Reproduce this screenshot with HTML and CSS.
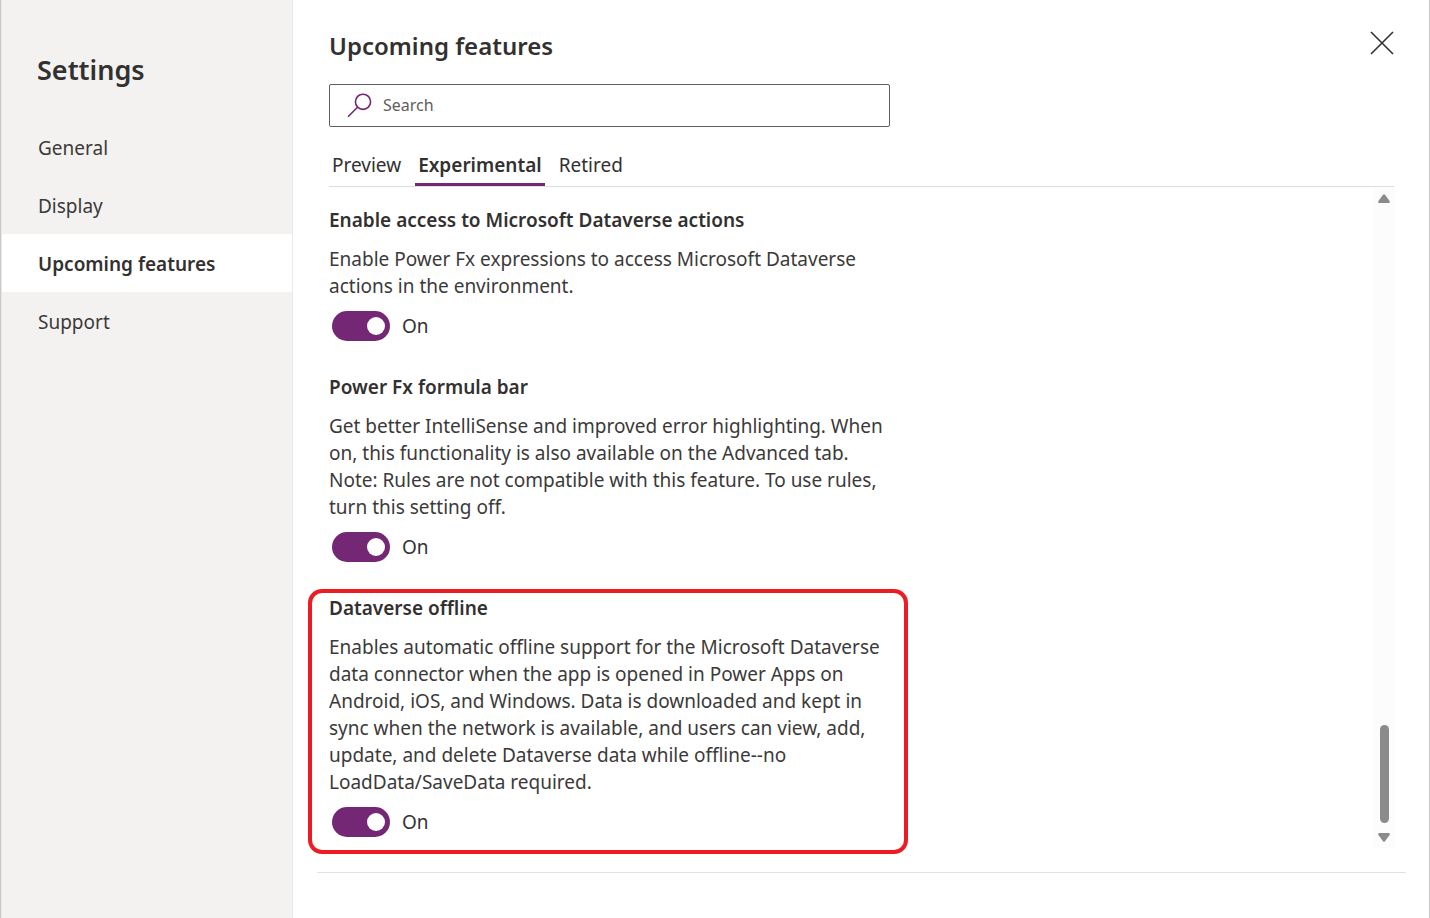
FILE: index.html
```html
<!DOCTYPE html>
<html lang="en">
<head>
<meta charset="utf-8">
<title>Settings</title>
<link rel="stylesheet" href="styles.css">
</head>
<body>
<div class="dialog">
  <aside class="sidebar">
    <h1 class="sidebar-title">Settings</h1>
    <nav class="nav" aria-label="Settings">
      <a class="nav-link" href="#general">General</a>
      <a class="nav-link" href="#display">Display</a>
      <a class="nav-link nav-link-active" href="#upcoming" aria-current="page">Upcoming features</a>
      <a class="nav-link" href="#support">Support</a>
    </nav>
  </aside>
  <main class="main">
    <header class="header">
      <h2 class="page-title">Upcoming features</h2>
      <button class="close" type="button" aria-label="Close">
        <svg width="24" height="24" viewBox="0 0 24 24" fill="none" stroke="#323130" stroke-width="1.6"><path d="M1 1 23 23M23 1 1 23"/></svg>
      </button>
    </header>
    <label class="search">
      <svg width="26" height="26" viewBox="0 0 26 26" fill="none" stroke="#742774" stroke-width="1.6"><circle cx="16" cy="8.8" r="7.6"/><path d="M10.5 14.3 1 23.8"/></svg>
      <input class="search-input" type="search" placeholder="Search" aria-label="Search">
    </label>
    <div class="tabs" role="tablist">
      <button class="tab" type="button" role="tab" aria-selected="false">Preview</button>
      <button class="tab tab-active" type="button" role="tab" aria-selected="true">Experimental</button>
      <button class="tab" type="button" role="tab" aria-selected="false">Retired</button>
    </div>
    <div class="panel">
      <div class="features">
        <section class="feature">
          <h3 class="feature-title" id="actions">Enable access to Microsoft Dataverse actions</h3>
          <p class="feature-text">Enable Power Fx expressions to access Microsoft Dataverse actions in the environment.</p>
          <label class="toggle"><input class="switch" type="checkbox" role="switch" aria-describedby="actions" checked>On</label>
        </section>
        <section class="feature">
          <h3 class="feature-title" id="formula">Power Fx formula bar</h3>
          <p class="feature-text">Get better IntelliSense and improved error highlighting. When on, this functionality is also available on the Advanced tab. Note: Rules are not compatible with this feature. To use rules, turn this setting off.</p>
          <label class="toggle"><input class="switch" type="checkbox" role="switch" aria-describedby="formula" checked>On</label>
        </section>
        <section class="feature feature-marked">
          <h3 class="feature-title" id="offline">Dataverse offline</h3>
          <p class="feature-text">Enables automatic offline support for the Microsoft Dataverse data connector when the app is opened in Power Apps on Android, iOS, and Windows. Data is downloaded and kept in sync when the network is available, and users can view, add, update, and delete Dataverse data while offline--no LoadData/SaveData required.</p>
          <label class="toggle"><input class="switch" type="checkbox" role="switch" aria-describedby="offline" checked>On</label>
        </section>
      </div>
      <div class="scrollbar" aria-hidden="true">
        <svg width="12" height="9" viewBox="0 0 12 9" fill="#8b8b8b"><path d="M5 .8Q6-.4 7 .8L11.6 7Q12.3 9 10.8 9H1.2Q-.3 9 .4 7Z"/></svg>
        <span class="thumb"></span>
        <svg width="12" height="9" viewBox="0 0 12 9" fill="#8b8b8b"><path d="M5 8.2Q6 9.4 7 8.2L11.6 2Q12.3 0 10.8 0H1.2Q-.3 0 .4 2Z"/></svg>
      </div>
    </div>
    <footer class="footer"></footer>
  </main>
</div>
</body>
</html>
```
FILE: styles.css
```css
* { box-sizing: border-box; }

body {
  margin: 0;
  font-family: "Noto Sans", "Open Sans", sans-serif;
  font-size: 19px;
  line-height: 27px;
  color: #323130;
  background: #fff;
}

h1, h2, h3, p { margin: 0; font-weight: 600; }

button, input { font: inherit; color: inherit; }

.dialog {
  display: grid;
  grid-template-columns: 292px 1fr;
  min-height: 100vh;
  border: solid #c8c8c8;
  border-width: 0 1px;
}

.sidebar {
  background: #f3f2f1;
  border-right: 1px solid #eaeaea;
  border-left: 1px solid #eaeaea;
}

.sidebar-title {
  padding: 50px 35px 28px;
  font-size: 27px;
  line-height: 40px;
}

.nav { display: flex; flex-direction: column; }

.nav-link {
  padding: 2px 36px 0;
  line-height: 56px;
  color: #3b3a39;
  text-decoration: none;
}

.nav-link-active {
  background: #fff;
  border-radius: 2px;
  color: #323130;
  font-weight: 600;
}

.main {
  display: flex;
  flex-direction: column;
  padding: 26px 35px 0 36px;
}

.header {
  display: flex;
  justify-content: space-between;
  align-items: flex-start;
  padding-bottom: 18px;
}

.page-title { font-size: 24px; line-height: 40px; }

.close {
  display: flex;
  padding: 5px 0;
  border: 0;
  background: none;
}

.search {
  display: flex;
  align-items: center;
  gap: 10px;
  width: 100%;
  max-width: 561px;
  height: 43px;
  padding: 0 17px;
  border: 1px solid #605e5c;
  border-radius: 2px;
}

.search-input {
  flex: 1;
  min-width: 0;
  padding: 0;
  border: 0;
  outline: 0;
  background: none;
  font-size: 16px;
}

.search-input::placeholder { color: #605e5c; opacity: 1; }

.tabs {
  display: flex;
  gap: 11px;
  margin-top: 17px;
  border-bottom: 1px solid #dcdcdc;
}

.tab {
  height: 42px;
  padding: 3px 3px 0;
  border: 0;
  border-bottom: 3px solid transparent;
  background: none;
}

.tab-active { border-bottom-color: #742774; font-weight: 600; }

.panel {
  display: flex;
  flex: 1;
  justify-content: space-between;
}

.features {
  display: flex;
  flex-direction: column;
  gap: 33px;
  max-width: 568px;
  padding-top: 20px;
}

.feature { position: relative; }

.feature-title { font-size: 19px; }

.feature-text {
  margin: 12px 0 11px;
  font-weight: 400;
  color: #3b3a39;
}

.feature-marked::after {
  content: "";
  position: absolute;
  inset: -6px -11px -17px -21px;
  border: 4px solid #ed1c24;
  border-radius: 14px;
  pointer-events: none;
}

.toggle {
  display: flex;
  width: max-content;
  align-items: center;
  gap: 12px;
  padding-left: 3px;
}

.switch {
  appearance: none;
  display: flex;
  justify-content: flex-end;
  align-items: center;
  width: 58px;
  height: 30px;
  margin: 0;
  padding: 0 5px;
  border-radius: 15px;
  background: #742774;
}

.switch::after {
  content: "";
  width: 18px;
  height: 18px;
  border-radius: 50%;
  background: #fff;
}

.switch:not(:checked) { justify-content: flex-start; background: #8a8886; }

.scrollbar {
  display: flex;
  flex-direction: column;
  align-items: center;
  width: 20px;
  margin: 1px 0 24px;
  padding: 6px 0;
  background: #fcfcfc;
}

.thumb {
  width: 9px;
  height: 98px;
  margin: auto 0 10px;
  border-radius: 5px;
  background: #8b8b8b;
}

.footer {
  height: 46px;
  margin: 0 -12px;
  border-top: 1px solid #e1e1e1;
}
```
